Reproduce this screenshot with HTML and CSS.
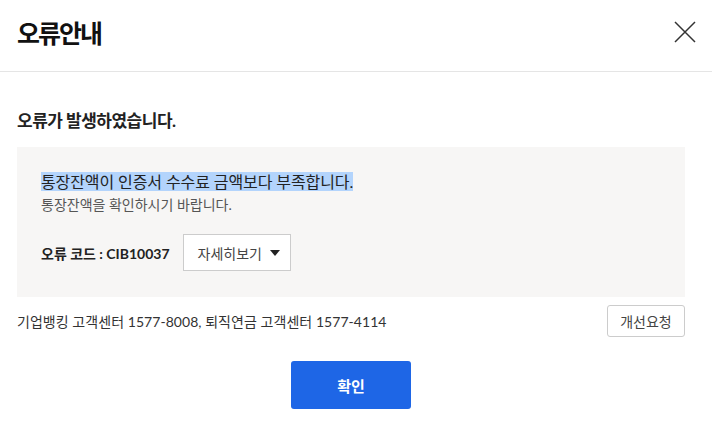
FILE: index.html
```html
<!DOCTYPE html>
<html lang="ko">
<head>
<meta charset="utf-8">
<title>오류안내</title>
<link rel="stylesheet" href="styles.css">
</head>
<body>
<div class="dialog">
  <header class="dialog-header">
    <h1 class="dialog-title">오류안내</h1>
    <button class="close-btn" aria-label="닫기">
      <svg width="22" height="22" viewBox="0 0 22 22"><path d="M1 1 L21 21 M21 1 L1 21" stroke="#333" stroke-width="1.5" fill="none"/></svg>
    </button>
  </header>
  <main class="dialog-body">
    <h2 class="error-heading">오류가 발생하였습니다.</h2>
    <section class="error-box">
      <p class="error-msg"><span class="selected">통장잔액이 인증서 수수료 금액보다 부족합니다.</span></p>
      <p class="error-sub">통장잔액을 확인하시기 바랍니다.</p>
      <div class="code-row">
        <span class="code-label">오류 코드 : CIB10037</span>
        <div class="detail-select">
          <span>자세히보기</span>
          <span class="caret"></span>
        </div>
      </div>
    </section>
    <div class="contact-row">
      <span class="contact">기업뱅킹 고객센터 1577-8008, 퇴직연금 고객센터 1577-4114</span>
      <button class="improve-btn">개선요청</button>
    </div>
    <div class="actions">
      <button class="confirm-btn">확인</button>
    </div>
  </main>
</div>
</body>
</html>
```
FILE: styles.css
```css
* { box-sizing: border-box; }
html, body { margin: 0; padding: 0; background: #fff; }
body {
  font-family: Lato, "Noto Sans CJK KR", sans-serif;
  color: #222;
  width: 712px;
  height: 443px;
  overflow: hidden;
}
.dialog-header {
  height: 72px;
  padding: 0 17px 8px 17px;
  border-bottom: 1px solid #e5e5e5;
  display: flex;
  align-items: center;
  justify-content: space-between;
}
.dialog-title {
  margin: 0;
  font-size: 25px;
  font-weight: 700;
  letter-spacing: -2px;
  color: #111;
}
.close-btn {
  border: 0;
  background: none;
  padding: 0;
  width: 22px;
  height: 22px;
  margin-right: -1px;
  display: flex;
}
.dialog-body {
  padding: 0 27px 0 17px;
}
.error-heading {
  margin: 37px 0 0 0;
  height: 38px;
  font-size: 17px;
  line-height: 24px;
  font-weight: 700;
  letter-spacing: -0.5px;
  color: #222;
}
.error-box {
  background: #f7f6f5;
  height: 150px;
  padding: 24px 24px 0 24px;
}
.error-msg {
  margin: 0;
  font-size: 16px;
  line-height: 22px;
  letter-spacing: -0.1px;
  color: #222;
}
.selected { background: #b3d4fc; }
.error-sub {
  margin: 3px 0 0 0;
  font-size: 14px;
  line-height: 18px;
  letter-spacing: 0;
  color: #555;
}
.code-row {
  margin-top: 20px;
  display: flex;
  align-items: center;
  gap: 13px;
}
.code-label {
  font-size: 14px;
  font-weight: 700;
  letter-spacing: 0;
  color: #222;
}
.detail-select {
  width: 108px;
  height: 37px;
  border: 1px solid #ccc;
  background: #fff;
  display: flex;
  align-items: center;
  justify-content: space-between;
  padding: 0 10px 0 14px;
  font-size: 14px;
  letter-spacing: 0;
  color: #444;
}
.caret {
  width: 0;
  height: 0;
  border-left: 5px solid transparent;
  border-right: 5px solid transparent;
  border-top: 6px solid #222;
}
.contact-row {
  margin-top: 8px;
  display: flex;
  align-items: center;
  justify-content: space-between;
}
.contact {
  font-size: 14px;
  letter-spacing: 0.05px;
  color: #333;
}
.improve-btn {
  width: 78px;
  height: 32px;
  border: 1px solid #ccc;
  border-radius: 3px;
  background: #fff;
  font-family: Lato, "Noto Sans CJK KR", sans-serif;
  font-size: 14px;
  letter-spacing: 0;
  color: #444;
  padding: 0;
}
.actions {
  margin-top: 24px;
  display: flex;
  justify-content: center;
}
.confirm-btn {
  width: 120px;
  height: 48px;
  border: 0;
  border-radius: 3px;
  background: #1e66e6;
  color: #fff;
  font-family: Lato, "Noto Sans CJK KR", sans-serif;
  font-size: 15px;
  font-weight: 700;
  padding: 0;
}
```
